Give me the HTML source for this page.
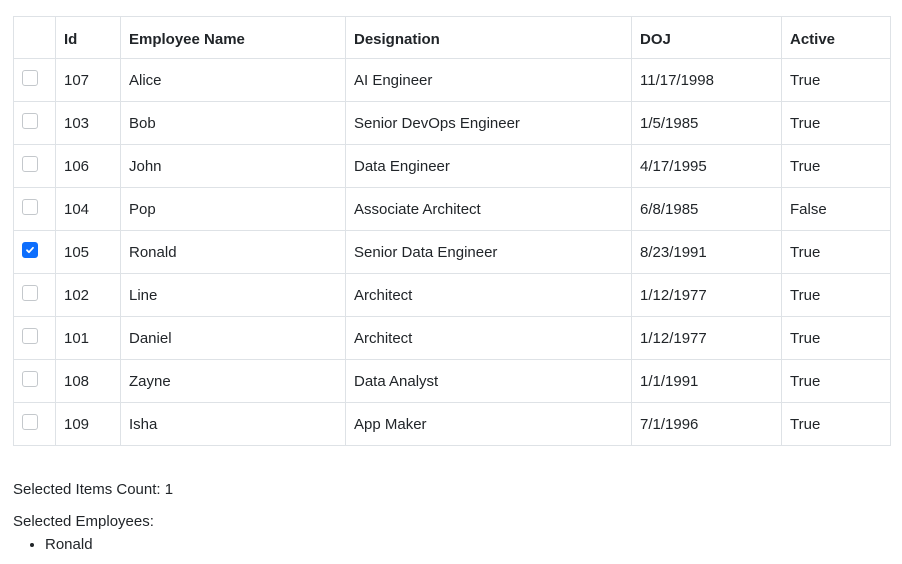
<!DOCTYPE html>
<html><head><meta charset="utf-8"><style>
body{margin:0;background:#fff;font-family:"Liberation Sans",sans-serif;color:#212529;font-size:15px;}
table{position:absolute;left:13px;top:16px;border-collapse:collapse;table-layout:fixed;width:877px;}
td,th{border:1px solid #dee2e6;padding:0 0 0 8px;text-align:left;height:42px;box-sizing:border-box;white-space:nowrap;}
th{font-weight:bold;height:42px;padding-top:3px;}
tr.r td{height:43px;padding-top:1px;}
.cb{display:inline-block;width:14px;height:14px;border:1px solid #c4c8cc;border-radius:3px;vertical-align:top;margin-top:-2px;position:relative;}
.cb.on{background:#0d6efd;border-color:#0d6efd;}
.cb.on svg{position:absolute;left:1px;top:1px;}
.t{position:absolute;left:13px;}
ul{position:absolute;left:13px;top:536px;margin:0;padding-left:32px;}
</style></head><body>
<table>
<colgroup><col style="width:42px"><col style="width:65px"><col style="width:225px"><col style="width:286px"><col style="width:150px"><col style="width:109px"></colgroup>
<tr><th></th><th>Id</th><th>Employee Name</th><th>Designation</th><th>DOJ</th><th>Active</th></tr>
<tr class="r"><td><span class="cb"></span></td><td>107</td><td>Alice</td><td>AI Engineer</td><td>11/17/1998</td><td>True</td></tr>
<tr class="r"><td><span class="cb"></span></td><td>103</td><td>Bob</td><td>Senior DevOps Engineer</td><td>1/5/1985</td><td>True</td></tr>
<tr class="r"><td><span class="cb"></span></td><td>106</td><td>John</td><td>Data Engineer</td><td>4/17/1995</td><td>True</td></tr>
<tr class="r"><td><span class="cb"></span></td><td>104</td><td>Pop</td><td>Associate Architect</td><td>6/8/1985</td><td>False</td></tr>
<tr class="r"><td><span class="cb on"><svg width="12" height="12" viewBox="0 0 12 12"><path d="M3 6.2l2 2 4-4.4" stroke="#fff" stroke-width="1.8" fill="none" stroke-linecap="round" stroke-linejoin="round"/></svg></span></td><td>105</td><td>Ronald</td><td>Senior Data Engineer</td><td>8/23/1991</td><td>True</td></tr>
<tr class="r"><td><span class="cb"></span></td><td>102</td><td>Line</td><td>Architect</td><td>1/12/1977</td><td>True</td></tr>
<tr class="r"><td><span class="cb"></span></td><td>101</td><td>Daniel</td><td>Architect</td><td>1/12/1977</td><td>True</td></tr>
<tr class="r"><td><span class="cb"></span></td><td>108</td><td>Zayne</td><td>Data Analyst</td><td>1/1/1991</td><td>True</td></tr>
<tr class="r"><td><span class="cb"></span></td><td>109</td><td>Isha</td><td>App Maker</td><td>7/1/1996</td><td>True</td></tr>
</table>
<div class="t" style="top:481px">Selected Items Count: 1</div>
<div class="t" style="top:513px">Selected Employees:</div>
<ul><li>Ronald</li></ul>
</body></html>
